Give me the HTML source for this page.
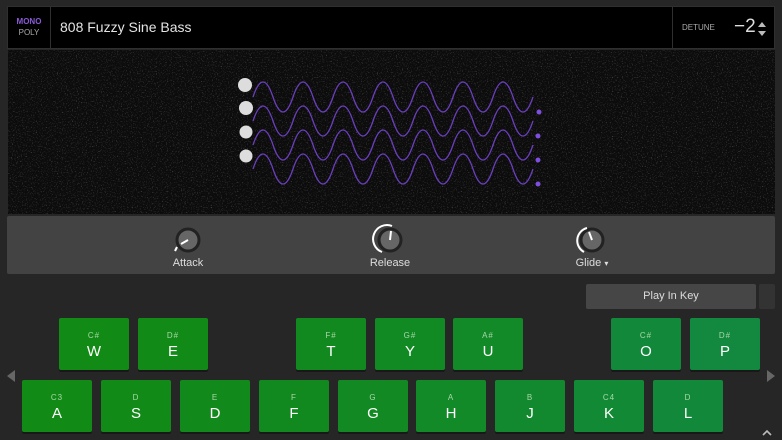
<!DOCTYPE html>
<html><head><style>
*{margin:0;padding:0;box-sizing:border-box}
body{width:782px;height:440px;background:#262626;font-family:"Liberation Sans",sans-serif;position:relative;overflow:hidden}
.hdr{position:absolute;left:7px;top:6px;width:768px;height:43px;background:#000;border:1px solid #2f2f2f}
.mp{position:absolute;left:0;top:0;width:43px;height:41px;border-right:1px solid #2f2f2f;text-align:center;font-size:8px;line-height:11px;padding-top:9px;color:#aaa}
.mp b{color:#8a5ad6;font-weight:bold;display:block}
.title{position:absolute;left:52px;top:12px;font-size:14px;color:#e4e4e4}
.det{position:absolute;left:664px;top:0;width:104px;height:41px;border-left:1px solid #2f2f2f}
.det span{position:absolute;left:9px;top:16px;font-size:8px;color:#aaa}
.det i{position:absolute;left:61px;top:9px;font-style:normal;font-size:19px;color:#ddd}
.wave{position:absolute;left:8px;top:50px;width:767px;height:164px;background:#0c0c0c;overflow:hidden}
.panel{position:absolute;left:7px;top:216px;width:768px;height:58px;background:#434343;border-radius:2px}
.lbl{position:absolute;top:41px;font-size:11px;color:#ddd;transform:translateX(-50%)}
.pik{position:absolute;left:586px;top:284px;width:170px;height:25px;background:#464646;border-radius:2px;color:#ddd;font-size:11px;text-align:center;line-height:25px}
.dd{position:absolute;left:759px;top:284px;width:16px;height:25px;background:#333;border-radius:2px}
.k{position:absolute;width:70px;height:52px;border-radius:2px;color:#fff;text-align:center;box-shadow:0 2px 0 rgba(0,0,0,.35)}
.k small{display:block;font-size:8px;color:#a8d8a8;margin-top:13px;height:10px;letter-spacing:1px}
.k b{display:block;font-size:15px;font-weight:normal;margin-top:2px}
.b{top:318px}.w{top:380px}
</style></head><body>
<div class="hdr">
<div class="mp"><b>MONO</b>POLY</div>
<div class="title">808 Fuzzy Sine Bass</div>
<div class="det"><span>DETUNE</span><i>−2</i>
<svg style="position:absolute;left:84px;top:13px" width="10" height="18"><path d="M1 7L5 2L9 7Z M1 11L5 16L9 11Z" fill="#bbb"/></svg></div>
</div>
<div class="wave">
<svg width="782" height="220" style="position:absolute;left:-8px;top:-50px">
<defs><filter id="n"><feTurbulence type="fractalNoise" baseFrequency="0.8" numOctaves="2" seed="3"/><feColorMatrix values="0 0 0 0 0.55 0 0 0 0 0.55 0 0 0 0 0.55 0 0 0 1.4 -0.8"/></filter></defs>
<rect x="8" y="50" width="767" height="164" fill="#0c0c0c"/>
<rect x="8" y="50" width="767" height="164" filter="url(#n)" opacity="0.8"/>
<g fill="none" stroke="#6b3fc0" stroke-width="1.3">
<path d="M253,97 q10,-30 20,0 t20,0 t20,0 t20,0 t20,0 t20,0 t20,0 t20,0 t20,0 t20,0 t20,0 t20,0 t20,0 t20,0"/>
<path d="M253,121 q10,-30 20,0 t20,0 t20,0 t20,0 t20,0 t20,0 t20,0 t20,0 t20,0 t20,0 t20,0 t20,0 t20,0 t20,0"/>
<path d="M253,145 q10,-30 20,0 t20,0 t20,0 t20,0 t20,0 t20,0 t20,0 t20,0 t20,0 t20,0 t20,0 t20,0 t20,0 t20,0"/>
<path d="M253,169 q10,-30 20,0 t20,0 t20,0 t20,0 t20,0 t20,0 t20,0 t20,0 t20,0 t20,0 t20,0 t20,0 t20,0 t20,0"/>
</g>
<g fill="#ddd"><circle cx="245" cy="85" r="7"/><circle cx="246" cy="108" r="7"/><circle cx="246" cy="132" r="6.5"/><circle cx="246" cy="156" r="6.5"/></g>
<g fill="#7d4ee0"><circle cx="539" cy="112" r="2.5"/><circle cx="538" cy="136" r="2.5"/><circle cx="538" cy="160" r="2.5"/><circle cx="538" cy="184" r="2.5"/></g>
</svg></div>
<div class="panel">
<svg width="768" height="58" style="position:absolute;left:0;top:0">
<g stroke="#fff" stroke-width="2" fill="#666">
<circle cx="181" cy="24" r="11" stroke="#222" stroke-width="3"/>
<line x1="181" y1="24" x2="174" y2="28"/><path d="M170 31 L168 35" fill="none"/>
<circle cx="383" cy="24" r="11" stroke="#222" stroke-width="3"/>
<line x1="383" y1="24" x2="384" y2="15"/><path d="M375 36 A13 13 0 0 1 385 10" fill="none"/>
<circle cx="585" cy="24" r="11" stroke="#222" stroke-width="3"/>
<line x1="585" y1="24" x2="582" y2="16"/><path d="M577 36 A13 13 0 0 1 580 12" fill="none"/>
</g></svg>
<div class="lbl" style="left:181px">Attack</div>
<div class="lbl" style="left:383px">Release</div>
<div class="lbl" style="left:585px">Glide <span style="font-size:8px">▾</span></div>
</div>
<div class="pik">Play In Key</div><div class="dd"></div>
<div class="k b" style="left:59px;background:#128a16"><small>C#</small><b>W</b></div>
<div class="k b" style="left:138px;background:#128a18"><small>D#</small><b>E</b></div>
<div class="k b" style="left:296px;background:#12891f"><small>F#</small><b>T</b></div>
<div class="k b" style="left:375px;background:#128a24"><small>G#</small><b>Y</b></div>
<div class="k b" style="left:453px;background:#128a28"><small>A#</small><b>U</b></div>
<div class="k b" style="left:611px;background:#12893a"><small>C#</small><b>O</b></div>
<div class="k b" style="left:690px;background:#12893e"><small>D#</small><b>P</b></div>
<div class="k w" style="left:22px;background:#128a16"><small>C3</small><b>A</b></div>
<div class="k w" style="left:101px;background:#128a18"><small>D</small><b>S</b></div>
<div class="k w" style="left:180px;background:#12891b"><small>E</small><b>D</b></div>
<div class="k w" style="left:259px;background:#12891e"><small>F</small><b>F</b></div>
<div class="k w" style="left:338px;background:#128922"><small>G</small><b>G</b></div>
<div class="k w" style="left:416px;background:#128a28"><small>A</small><b>H</b></div>
<div class="k w" style="left:495px;background:#12892e"><small>B</small><b>J</b></div>
<div class="k w" style="left:574px;background:#128934"><small>C4</small><b>K</b></div>
<div class="k w" style="left:653px;background:#12893a"><small>D</small><b>L</b></div>
<svg style="position:absolute;left:6px;top:369px" width="10" height="14"><path d="M9 1L1 7L9 13Z" fill="#666"/></svg>
<svg style="position:absolute;left:766px;top:369px" width="10" height="14"><path d="M1 1L9 7L1 13Z" fill="#666"/></svg>
<svg style="position:absolute;left:761px;top:429px" width="12" height="8"><path d="M2 6L6 2L10 6" stroke="#bbb" stroke-width="1.6" fill="none"/></svg>
</body></html>
